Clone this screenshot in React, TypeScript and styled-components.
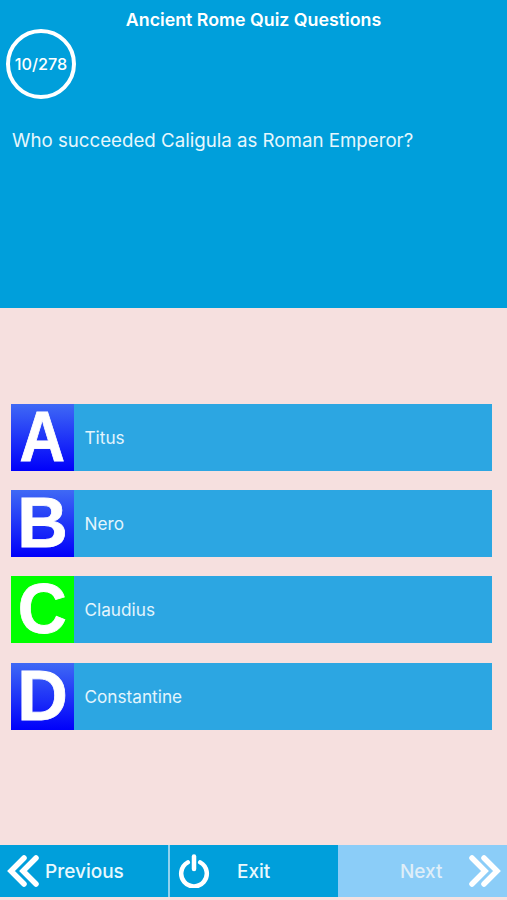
import styled, { createGlobalStyle } from 'styled-components';

const GlobalStyle = createGlobalStyle`
  html, body {
    margin: 0;
    padding: 0;
    background: #f6e0df;
  }
`;

const Page = styled.div`
  width: 507px;
  height: 900px;
  display: flex;
  flex-direction: column;
  overflow: hidden;
  background: #f6e0df;
  font-family: Inter, "Liberation Sans", sans-serif;
  color: #fff;
`;

const Header = styled.header`
  height: 308px;
  flex: none;
  box-sizing: border-box;
  padding: 9px 6px 0;
  background: #009fdb;
`;

const Title = styled.h1`
  margin: 0;
  height: 21px;
  font-size: 17.8px;
  line-height: 21px;
  font-weight: 600;
  text-align: center;
`;

const Counter = styled.div`
  width: 70px;
  height: 70px;
  margin-top: -1px;
  box-sizing: border-box;
  border: 4px solid #fff;
  border-radius: 50%;
  display: flex;
  align-items: center;
  justify-content: center;
  font-size: 16.2px;
  font-weight: 500;
  white-space: nowrap;
`;

const Question = styled.p`
  margin: 29px 0 0 6px;
  font-size: 18.7px;
  line-height: 26px;
  color: #e6f7fd;
`;

const Answers = styled.main`
  flex: 1;
  display: flex;
  flex-direction: column;
  gap: 19.2px;
  padding: 96px 15.5px 0 11px;
`;

const Answer = styled.div`
  height: 67px;
  display: flex;
  align-items: center;
  background: #2ca6e2;
`;

const Letter = styled.div<{ $correct?: boolean }>`
  width: 63px;
  height: 100%;
  flex: none;
  display: flex;
  align-items: center;
  justify-content: center;
  background: ${({ $correct }) =>
    $correct ? '#00ff00' : 'linear-gradient(180deg, #3f69f5 0%, #0000fa 100%)'};
`;

// the A is narrower in the reference than in this font
const LetterGlyph = styled.span<{ $stretch: number }>`
  display: block;
  font-family: "Liberation Sans", Arial, sans-serif;
  font-size: 70px;
  line-height: 67px;
  font-weight: 700;
  -webkit-text-stroke: 0.8px #fff;
  transform: scaleX(${({ $stretch }) => $stretch});
`;

const AnswerText = styled.span`
  margin-left: 10.5px;
  font-size: 17.2px;
  color: #e3f5fd;
`;

const Footer = styled.footer`
  height: 52px;
  flex: none;
  margin-bottom: 3px;
  display: flex;
`;

const FooterButton = styled.button<{ $disabled?: boolean; $width: number }>`
  width: ${({ $width }) => $width}px;
  flex: none;
  height: 100%;
  padding: 0;
  border: none;
  display: flex;
  align-items: center;
  background: ${({ $disabled }) => ($disabled ? '#8bcdf8' : '#009fdb')};
  color: ${({ $disabled }) => ($disabled ? '#dfeef8' : '#e9f8fd')};
  font-family: inherit;
  font-size: 19px;
  font-weight: 500;
`;

const Divider = styled.div`
  width: 2px;
  flex: none;
  background: #8fd2ef;
`;

const Icon = styled.svg<{ $left: number }>`
  flex: none;
  margin-left: ${({ $left }) => $left}px;
`;

const ButtonLabel = styled.span<{ $left: number }>`
  margin-left: ${({ $left }) => $left}px;
`;

const answers = [
  { letter: 'A', text: 'Titus', stretch: 0.9 },
  { letter: 'B', text: 'Nero', stretch: 1 },
  { letter: 'C', text: 'Claudius', stretch: 0.97, correct: true },
  { letter: 'D', text: 'Constantine', stretch: 1 },
];

const App = () => {
  return (
    <Page>
      <GlobalStyle />
      <Header>
        <Title>Ancient Rome Quiz Questions</Title>
        <Counter>10/278</Counter>
        <Question>Who succeeded Caligula as Roman Emperor?</Question>
      </Header>
      <Answers>
        {answers.map((a) => (
          <Answer key={a.letter}>
            <Letter $correct={a.correct}>
              <LetterGlyph $stretch={a.stretch}>{a.letter}</LetterGlyph>
            </Letter>
            <AnswerText>{a.text}</AnswerText>
          </Answer>
        ))}
      </Answers>
      <Footer>
        <FooterButton $width={168}>
          <Icon $left={7} width="32" height="34" viewBox="0 0 32 34" fill="none" stroke="#fff" strokeWidth="5.5" strokeLinecap="round" strokeLinejoin="miter">
            <path d="M17 4 L4 17 L17 30" />
            <path d="M29 4 L16 17 L29 30" />
          </Icon>
          <ButtonLabel $left={6}>Previous</ButtonLabel>
        </FooterButton>
        <Divider />
        <FooterButton $width={168}>
          <Icon $left={8} width="32" height="34" viewBox="0 0 32 34" fill="none" stroke="#fff" strokeWidth="4.5" strokeLinecap="round">
            <path d="M9.8 8.4 A12.8 12.8 0 1 0 22.2 8.4" />
            <path d="M16 2.5 V15" />
          </Icon>
          <ButtonLabel $left={27}>Exit</ButtonLabel>
        </FooterButton>
        <FooterButton $disabled $width={169}>
          <ButtonLabel $left={62}>Next</ButtonLabel>
          <Icon $left={26} width="32" height="34" viewBox="0 0 32 34" fill="none" stroke="#fff" strokeWidth="5.5" strokeLinecap="round" strokeLinejoin="miter">
            <path d="M3 4 L16 17 L3 30" />
            <path d="M15 4 L28 17 L15 30" />
          </Icon>
        </FooterButton>
      </Footer>
    </Page>
  );
};

export default App;
